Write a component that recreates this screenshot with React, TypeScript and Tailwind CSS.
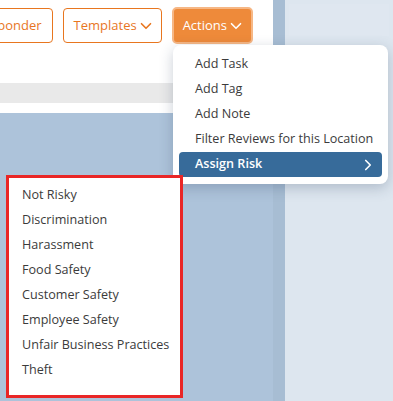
import React from 'react'
import { ChevronDown, ChevronRight } from 'lucide-react'

const actions = ['Add Task', 'Add Tag', 'Add Note', 'Filter Reviews for this Location']

const risks = [
  'Not Risky',
  'Discrimination',
  'Harassment',
  'Food Safety',
  'Customer Safety',
  'Employee Safety',
  'Unfair Business Practices',
  'Theft',
]

export default function App() {
  return (
    <div
      className="relative flex h-[401px] w-[393px] overflow-hidden bg-[#dde6ef] text-[12.6px]"
      style={{ fontFamily: '"Open Sans", "Noto Sans", sans-serif' }}
    >
      {/* left column */}
      <div className="flex w-[273px] flex-col bg-[#adc3da]">
        <div className="h-[113px] bg-white">
          <div className="flex h-[83px] justify-end gap-[10px] overflow-hidden pr-[20px] pt-[8px]">
            <button className="flex h-[35px] shrink-0 items-center rounded-[4px] border border-[#e8761f] px-[10px] text-[13px] text-[#e8761f]">
              Autoresponder
            </button>
            <button className="flex h-[35px] shrink-0 items-center rounded-[4px] border border-[#e8761f] pl-[10px] pr-[6px] text-[13px] text-[#e8761f]">
              Templates
              <ChevronDown size={18} strokeWidth={2.2} />
            </button>
            <button className="-mt-[1px] flex h-[37px] shrink-0 items-center rounded-[5px] border-2 border-[#f6b785] bg-[#ee8a3a] pl-[9px] pr-[6px] text-[13px] text-white">
              Actions
              <ChevronDown size={18} strokeWidth={2.2} />
            </button>
          </div>
          <div className="h-[20px] bg-[#e9e9e9]" />
        </div>
      </div>
      <div className="w-[13px] bg-[#a7bdd3]" />
      <div className="flex-1 p-[4px]">
        <div className="h-[32px] w-[100px] bg-[#dfe7f0]" />
      </div>

      {/* actions dropdown */}
      <div className="absolute left-[173px] top-[45px] w-[215px] rounded-[8px] bg-white px-[6px] pb-[7px] pt-[7px] shadow-[0_4px_14px_rgba(40,60,90,0.25)]">
        {actions.map((a) => (
          <div key={a} className="flex h-[25px] items-center pl-[16px] text-[#3b3b3b]">
            {a}
          </div>
        ))}
        <div className="flex h-[25px] items-center justify-between rounded-[4px] bg-[#376b9a] pl-[16px] pr-[5px] font-semibold text-white">
          Assign Risk
          <ChevronRight size={18} strokeWidth={2.2} />
        </div>
      </div>

      {/* risk submenu */}
      <div className="absolute left-[6px] top-[175px] w-[177px] border-[3px] border-[#e92626] bg-white pb-[12px] pt-[5px]">
        {risks.map((r) => (
          <div key={r} className="flex h-[25px] items-center pl-[13px] text-[#3b3b3b]">
            {r}
          </div>
        ))}
      </div>
    </div>
  )
}
